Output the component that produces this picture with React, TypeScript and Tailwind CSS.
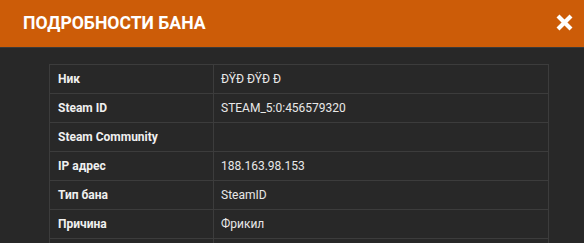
import React from "react";

const rows: [string, string][] = [
  ["Ник", "ÐŸÐ ÐŸÐ Ð"],
  ["Steam ID", "STEAM_5:0:456579320"],
  ["Steam Community", ""],
  ["IP адрес", "188.163.98.153"],
  ["Тип бана", "SteamID"],
  ["Причина", "Фрикил"],
  ["", ""],
];

export default function App() {
  return (
    <div className="w-[584px] h-[243px] overflow-hidden bg-[#282828] font-['Roboto',sans-serif]">
      <div className="h-[48px] bg-[#cc5c08] flex items-center justify-between pl-[23px] pr-[10px] border-b border-[#3a3a3a]">
        <div className="text-white font-bold text-[17.6px] leading-none">ПОДРОБНОСТИ БАНА</div>
        <svg width="19" height="19" viewBox="0 0 19 19" className="mt-[-2px]">
          <path d="M3 3 L16 16 M16 3 L3 16" stroke="white" strokeWidth="4.2" strokeLinecap="butt" />
        </svg>
      </div>
      <div className="pt-[16px] pl-[49px]">
        <table className="w-[500px] border-collapse">
          <tbody>
            {rows.map(([k, v], i) => (
              <tr key={i} className="h-[29px]">
                <td className="w-[164px] border border-[#3c3c3c] px-[8px] text-[12px] font-bold text-[#f0f0f0]">{k}</td>
                <td className="border border-[#3c3c3c] px-[7px] text-[12px] text-[#e8e8e8]">{v}</td>
              </tr>
            ))}
          </tbody>
        </table>
      </div>
    </div>
  );
}
